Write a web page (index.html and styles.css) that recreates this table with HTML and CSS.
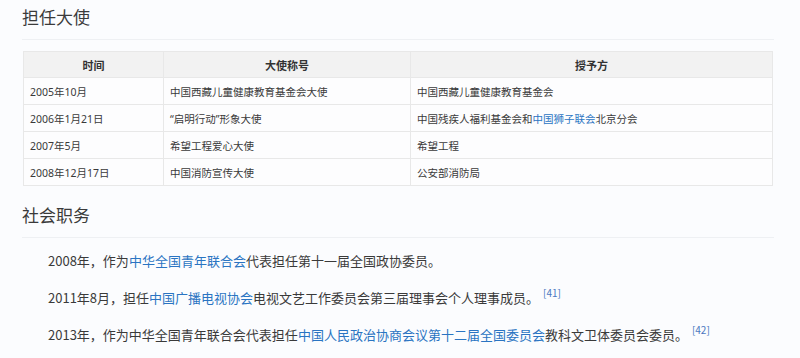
FILE: index.html
```html
<!DOCTYPE html>
<html lang="zh-CN">
<head>
<meta charset="utf-8">
<link rel="stylesheet" href="styles.css">
</head>
<body>
<div class="page">
  <h2 class="title">担任大使</h2>
  <table class="amb">
    <colgroup><col class="c1"><col class="c2"><col class="c3"></colgroup>
    <thead>
      <tr><th>时间</th><th>大使称号</th><th>授予方</th></tr>
    </thead>
    <tbody>
      <tr><td>2005年10月</td><td>中国西藏儿童健康教育基金会大使</td><td>中国西藏儿童健康教育基金会</td></tr>
      <tr><td>2006年1月21日</td><td>“启明行动”形象大使</td><td>中国残疾人福利基金会和<a class="lk">中国狮子联会</a>北京分会</td></tr>
      <tr><td>2007年5月</td><td>希望工程爱心大使</td><td>希望工程</td></tr>
      <tr><td>2008年12月17日</td><td>中国消防宣传大使</td><td>公安部消防局</td></tr>
    </tbody>
  </table>
  <h2 class="title second">社会职务</h2>
  <div class="paras">
    <p>2008年，作为<a class="lk">中华全国青年联合会</a>代表担任第十一届全国政协委员。</p>
    <p>2011年8月，担任<a class="lk">中国广播电视协会</a>电视文艺工作委员会第三届理事会个人理事成员。<sup class="ref">[41]</sup></p>
    <p>2013年，作为中华全国青年联合会代表担任<a class="lk">中国人民政治协商会议第十二届全国委员会</a>教科文卫体委员会委员。<sup class="ref">[42]</sup></p>
  </div>
</div>
</body>
</html>
```

FILE: styles.css
```css
html, body {
  margin: 0;
  padding: 0;
  background: #fbfcfe;
}
body {
  font-family: "Noto Sans CJK SC", "Noto Sans", sans-serif;
  color: #3a3a3a;
}
.page {
  width: 752px;
  padding: 0 0 0 22px;
}
.title {
  margin: 0;
  padding: 6px 0 12px 0;
  font-size: 17px;
  line-height: 21px;
  font-weight: normal;
  color: #3a3a3a;
  border-bottom: 1px solid #eef0f3;
}
.title.second {
  padding-top: 18px;
}
.amb {
  margin: 11px 0 0 1px;
  width: 750px;
  border-collapse: collapse;
  font-family: "Noto Sans", "Noto Sans CJK SC", sans-serif;
  font-size: 10.5px;
  table-layout: fixed;
  background: #fdfdfe;
}
.c1 { width: 140px; }
.c2 { width: 247px; }
.amb th, .amb td {
  border: 1px solid #e8e8e8;
  padding: 0 6px;
  text-align: left;
  font-weight: normal;
  color: #3a3a3a;
}
.amb th {
  background: #f2f2f2;
  height: 25px;
  text-align: center;
  font-weight: bold;
  font-size: 11px;
  color: #333;
}
.amb td {
  height: 26px;
}
.lk {
  color: #2a74c2;
  text-decoration: none;
}
.paras {
  padding: 14px 0 0 26px;
}
.paras p {
  margin: 0;
  font-size: 13px;
  line-height: 18px;
  height: 37px;
}
.ref {
  font-size: 10px;
  color: #4a78c0;
  margin-left: 4px;
  vertical-align: 6px;
  line-height: 0;
}
```
